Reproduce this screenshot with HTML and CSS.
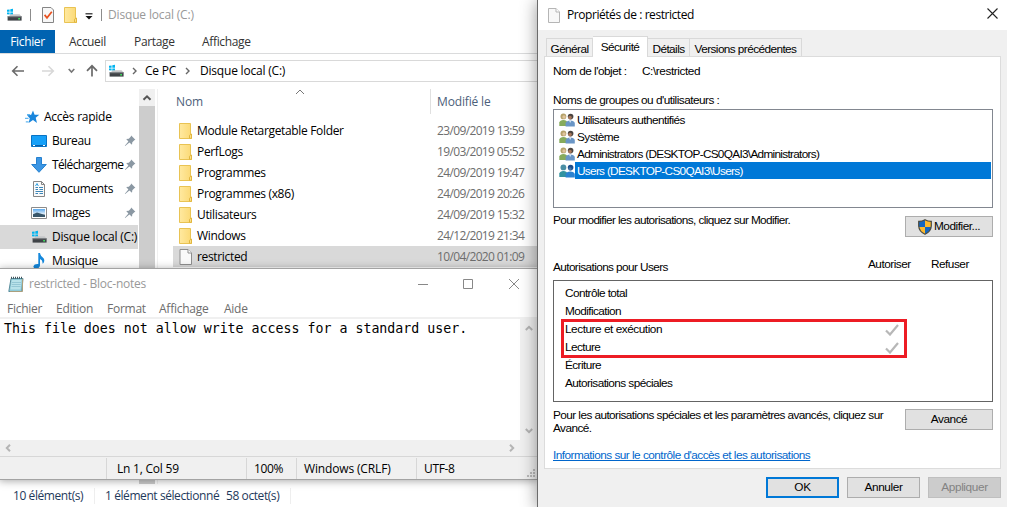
FILE: index.html
```
<!DOCTYPE html>
<html lang="fr">
<head>
<meta charset="utf-8">
<title>Disque local (C:)</title>
<link rel="stylesheet" href="styles.css">
</head>
<body>
<svg class="sprite" width="0" height="0" aria-hidden="true">
  <defs>
    <linearGradient id="fold" x1="0" x2="1"><stop offset="0" stop-color="#ffe9a0"/><stop offset="1" stop-color="#fbd975"/></linearGradient>
    <linearGradient id="sky" x1="0" x2="0" y1="0" y2="1"><stop offset="0" stop-color="#5aa9ee"/><stop offset=".6" stop-color="#dcebf8"/><stop offset="1" stop-color="#456"/></linearGradient>
  </defs>
  <symbol id="drive" viewBox="0 0 16 14">
    <path d="M1 1.8 3.6 1.4V3.7H1zM4.3 1.3 7 .8V3.7H4.3zM1 4.4H3.6V6.6L1 6.3zM4.3 4.4H7V7L4.3 6.7z" fill="#00b4f0"/>
    <path d="M3 8 5 6.2H13.5L15.5 8.5z" fill="#c4c6c8"/><path d="M1.6 8.3H15.6V12.6H1.6z" fill="#3f4347"/><path d="M1.6 8.3H15.6V9.2H1.6z" fill="#85898c"/><path d="M12.2 10H14V11.4H12.2z" fill="#40e060"/>
  </symbol>
  <symbol id="folder" viewBox="0 0 14 16">
    <path d="M.5.5H11.5V11.5H12.5V15.5H.5z" fill="url(#fold)" stroke="#e9c353"/><path d="M10.5 15.3V12.3L12.5 11V15.3z" fill="#fce38f" stroke="#e2b63f"/>
  </symbol>
  <symbol id="page" viewBox="0 0 13 16">
    <path d="M.5.5H8.5L12 4V15.5H.5z" fill="#f9f9f9" stroke="#8e8e8e"/><path d="M8.5.5V4H12" fill="#fff" stroke="#8e8e8e"/>
  </symbol>
  <symbol id="pin" viewBox="0 0 12 12">
    <path d="M7.2.6 11.4 4.8 10.3 5.3 8.3 7.2 8 9.8 5.4 7.4 1.2 11 .8 10.8 4.4 6.4 2.2 4 4.8 3.7 6.7 1.7z" fill="#8b98a3"/>
  </symbol>
  <symbol id="users" viewBox="0 0 16 14">
    <circle cx="4.4" cy="3.4" r="2.9" fill="#b5a26a"/><circle cx="5" cy="4" r="1.7" fill="#e0c49c"/>
    <path d="M.3 13V9.5Q1 7 4.4 7T8.5 9.5V13z" fill="#86ab5c"/>
    <circle cx="11.6" cy="3.6" r="2.8" fill="#4b4541"/><circle cx="11" cy="4.6" r="1.8" fill="#a8765a"/>
    <path d="M6.6 13.6V10Q7.5 7.4 11.3 7.4T15.8 10V13.6z" fill="#6a96c6"/><path d="M10 7.6 11.2 10 12.3 7.6z" fill="#dfeaf5"/>
  </symbol>
  <symbol id="users-sel" viewBox="0 0 16 14">
    <circle cx="4.4" cy="3.4" r="2.9" fill="#4b8fa5"/><path d="M.3 13V9.5Q1 7 4.4 7T8.5 9.5V13z" fill="#3293a0"/>
    <circle cx="11.6" cy="3.6" r="2.8" fill="#1b4c8b"/><circle cx="11" cy="4.8" r="1.6" fill="#4374a5"/>
    <path d="M6.6 13.6V10Q7.5 7.4 11.3 7.4T15.8 10V13.6z" fill="#2b82d0"/>
  </symbol>
</svg>

<main class="desktop">
  <section class="window explorer">
    <header class="ex-title">
      <svg class="i-drive"><use href="#drive"/></svg><i class="bar b1"></i>
      <svg class="i-check" viewBox="0 0 12 16"><path d="M.5.5H9L11.5 3V15.5H.5z" fill="#f7f7f7" stroke="#858585"/><path d="M2.6 7.9 5 10.8 9.8 4.8" fill="none" stroke="#e8501e" stroke-width="1.7"/></svg>
      <svg class="i-folder"><use href="#folder"/></svg>
      <svg class="i-drop" viewBox="0 0 8 7"><path d="M.5.8H7.5" stroke="#222" stroke-width="1.2"/><path d="M.5 3H7.5L4 6.5z" fill="#111"/></svg>
      <i class="bar b2"></i><span class="muted">Disque local (C:)</span>
    </header>
    <nav class="ribbon">
      <span class="file-tab">Fichier</span><span class="r1">Accueil</span><span class="r2">Partage</span><span>Affichage</span>
    </nav>
    <div class="address-row">
      <svg class="nav-arrows" viewBox="0 0 105 22">
        <path d="M24 11H13M17.5 6.2 12.7 11 17.5 15.8" fill="none" stroke="#6a6a6a" stroke-width="1.6"/>
        <path d="M42 11H53M48.5 6.2 53.3 11 48.5 15.8" fill="none" stroke="#d8d8d8" stroke-width="1.6"/>
        <path d="M68.7 9 71.5 12 74.3 9" fill="none" stroke="#777" stroke-width="1.6"/>
        <path d="M92 16.5V6M87 10.8 92 5.8 97 10.8" fill="none" stroke="#6a6a6a" stroke-width="1.7"/>
      </svg>
      <div class="address">
        <svg class="i-drive"><use href="#drive"/></svg>
        <svg class="chev" viewBox="0 0 5 8"><path d="M1 1 4 4 1 7" fill="none" stroke="#666" stroke-width="1.4"/></svg>
        <span class="crumb">Ce PC</span>
        <svg class="chev" viewBox="0 0 5 8"><path d="M1 1 4 4 1 7" fill="none" stroke="#666" stroke-width="1.4"/></svg>
        <span>Disque local (C:)</span>
      </div>
    </div>
    <div class="ex-body">
      <ul class="tree">
        <li class="root"><svg class="i16" viewBox="0 0 16 16"><path d="M9 1.5 10.6 5.8H15.3L11.7 8.8 13 14 9 11 4.6 14 5.8 9.2 3 6.2 7.2 5.8z" fill="#1a86dc"/><path d="M1 9.3H4.5M3 5.6H6M1.8 12.8H4.6" stroke="#62b6f0" stroke-width="1.2"/></svg><span>Accès rapide</span></li>
        <li><svg class="i16" viewBox="0 0 16 16"><path d="M.5 2.5H15.5V13.5H.5z" fill="#16a0f8" stroke="#0873c4"/><path d="M1 12.5H15" stroke="#0a5fa8"/><path d="M2 12.5H4M12 12.5H14" stroke="#fff"/></svg><span>Bureau</span><svg class="pin"><use href="#pin"/></svg></li>
        <li><svg class="i16" viewBox="0 0 16 16"><path d="M5.5.5H10.5V7.5H15.3L8 15.3.7 7.5H5.5z" fill="#3c96e4" stroke="#2580cf"/></svg><span class="downloads">Téléchargeme</span><svg class="pin"><use href="#pin"/></svg></li>
        <li><svg class="i16" viewBox="0 0 16 16"><path d="M2.5.5H10.5L13.5 3.5V15.5H2.5z" fill="#fafafa" stroke="#858585"/><path d="M10.5.5V3.5H13.5" fill="none" stroke="#858585"/><path d="M4.5 6.5H7M8 6.5H12M4.5 8.5H7M8.5 8.5H12M4.5 10.5H12M4.5 12.5H7M8.5 12.5H12" stroke="#3c86b8"/><path d="M4.5 5 6 2.5 7.3 5" fill="none" stroke="#2d9ee0"/></svg><span>Documents</span><svg class="pin"><use href="#pin"/></svg></li>
        <li><svg class="i16" viewBox="0 0 16 16"><path d="M.5 2.5H15.5V13.5H.5z" fill="#fff" stroke="#8b8b8b"/><path d="M2 4H14V12H2z" fill="url(#sky)"/><path d="M2 9.2 6 7.6 14 10V12H2z" fill="#38566a"/></svg><span>Images</span><svg class="pin"><use href="#pin"/></svg></li>
        <li class="selected"><svg class="i16"><use href="#drive"/></svg><span>Disque local (C:)</span></li>
        <li><svg class="i16" viewBox="0 0 16 16"><path d="M7.3 0H9Q9.4 2.8 11.8 4.5T12.8 9.5L11.6 11Q12 7.2 9 6V12.5Q8.5 15.6 5 15.8 2.3 15.6 2.4 13.3 3.2 10.6 7.3 11z" fill="#1588dc"/></svg><span>Musique</span></li>
      </ul>
      <div class="tree-scroll"><svg viewBox="0 0 16 17"><path d="M4.5 10.8 8 7.3 11.5 10.8" fill="none" stroke="#555" stroke-width="2"/></svg></div>
      <div class="files">
        <div class="file-head"><span class="name">Nom</span><svg class="sort" viewBox="0 0 10 6"><path d="M1 5 5 1 9 5" fill="none" stroke="#777"/></svg><span class="mod">Modifié le</span></div>
        <div class="file"><svg class="i-folder"><use href="#folder"/></svg><span class="name">Module Retargetable Folder</span><time>23/09/2019 13:59</time></div>
        <div class="file"><svg class="i-folder"><use href="#folder"/></svg><span class="name">PerfLogs</span><time>19/03/2019 05:52</time></div>
        <div class="file"><svg class="i-folder"><use href="#folder"/></svg><span class="name">Programmes</span><time>24/09/2019 19:47</time></div>
        <div class="file"><svg class="i-folder"><use href="#folder"/></svg><span class="name">Programmes (x86)</span><time>24/09/2019 20:26</time></div>
        <div class="file"><svg class="i-folder"><use href="#folder"/></svg><span class="name">Utilisateurs</span><time>24/09/2019 15:32</time></div>
        <div class="file"><svg class="i-folder"><use href="#folder"/></svg><span class="name">Windows</span><time>24/12/2019 21:34</time></div>
        <div class="file selected"><svg class="i-folder"><use href="#page"/></svg><span class="name">restricted</span><time>10/04/2020 01:09</time></div>
      </div>
    </div>
    <footer class="ex-status"><span class="count">10 élément(s)</span><span class="selection">1 élément sélectionné</span><span class="size">58 octet(s)</span></footer>
  </section>

  <section class="window notepad">
    <header class="np-title">
      <svg class="np-icon" viewBox="0 0 16 17"><path d="M3 2.5H15L13.8 15.5H.8z" fill="#8fcbd8" stroke="#5b8d9c"/><path d="M3.8 4H13.5L12.5 13.5H2.4z" fill="#b9e2ea"/><path d="M4 6.5H13M3.8 8.5H12.8M3.5 10.5H12.5" stroke="#85bccb" stroke-width=".7"/><path d="M3 1.8H15" stroke="#40555c" stroke-width="2" stroke-dasharray="1 1"/><path d="M14.5 3V15.5H2" fill="none" stroke="#ab9f7d"/></svg>
      <span>restricted - Bloc-notes</span>
      <svg class="controls" viewBox="0 0 110 16"><path d="M4 8.5H14" stroke="#888"/><path d="M49.5 3.5H58.5V12.5H49.5z" fill="none" stroke="#888"/><path d="M95 3 105 13M105 3 95 13" stroke="#888"/></svg>
    </header>
    <nav class="np-menu"><span class="m1">Fichier</span><span class="m2">Edition</span><span class="m3">Format</span><span class="m4">Affichage</span><span>Aide</span></nav>
    <div class="np-main">
      <p>This file does not allow write access for a standard user.</p>
      <div class="vscroll"><svg viewBox="0 0 8 6"><path d="M.8 5 4 1.8 7.2 5" fill="none" stroke="#b5b5b5" stroke-width="2"/></svg><svg viewBox="0 0 8 6"><path d="M.8 1 4 4.2 7.2 1" fill="none" stroke="#b5b5b5" stroke-width="2"/></svg></div>
    </div>
    <div class="hscroll"><svg viewBox="0 0 6 8"><path d="M5 .8 1.8 4 5 7.2" fill="none" stroke="#b5b5b5" stroke-width="2"/></svg><svg viewBox="0 0 6 8"><path d="M1 .8 4.2 4 1 7.2" fill="none" stroke="#b5b5b5" stroke-width="2"/></svg></div>
    <footer class="np-status"><span class="s0"></span><span class="s1">Ln 1, Col 59</span><span class="s2">100%</span><span class="s3">Windows (CRLF)</span><span class="s4">UTF-8</span>
      <svg class="grip" viewBox="0 0 8 8"><path d="M6 0h2v2H6zM3 3h2v2H3zM6 3h2v2H6zM0 6h2v2H0zM3 6h2v2H3zM6 6h2v2H6z" fill="#bbb"/></svg></footer>
  </section>

  <section class="window dialog">
    <header class="dg-title">
      <svg class="dg-icon" viewBox="0 0 12 15"><path d="M.5.5H8L11.5 4V14.5H.5z" fill="#f8f8f8" stroke="#b5b5b5"/><path d="M8 .5V4H11.5" fill="#fff" stroke="#b5b5b5"/></svg>
      <span>Propriétés de : restricted</span>
      <svg class="close" viewBox="0 0 11 11"><path d="M.5.5 10.5 10.5M10.5.5.5 10.5" stroke="#222" stroke-width="1.1"/></svg>
    </header>
    <nav class="tabs"><span class="t1">Général</span><span class="active">Sécurité</span><span class="t3">Détails</span><span class="t4">Versions précédentes</span></nav>
    <div class="panel">
      <div class="object"><span>Nom de l'objet :</span><span>C:\restricted</span></div>
      <div class="label">Noms de groupes ou d'utilisateurs :</div>
      <ul class="groups">
        <li><svg><use href="#users"/></svg><span>Utilisateurs authentifiés</span></li>
        <li><svg><use href="#users"/></svg><span>Système</span></li>
        <li><svg><use href="#users"/></svg><span class="adm">Administrators (DESKTOP-CS0QAI3\Administrators)</span></li>
        <li class="selected"><svg><use href="#users-sel"/></svg><span class="adm">Users (DESKTOP-CS0QAI3\Users)</span></li>
      </ul>
      <div class="edit-row"><span>Pour modifier les autorisations, cliquez sur Modifier.</span>
        <button class="side-btn"><svg viewBox="0 0 14 16"><path d="M7 .7Q10 2.5 13.3 2.4V7Q13 12.5 7 15.3 1 12.5.7 7V2.4Q4 2.5 7 .7z" fill="#fcb92c"/><path d="M7 1V8H.8V2.4Q4 2.5 7 1zM7 8H13.2Q12.5 12.5 7 15z" fill="#1467c0"/><path d="M7 .7Q10 2.5 13.3 2.4V7Q13 12.5 7 15.3 1 12.5.7 7V2.4Q4 2.5 7 .7z" fill="none" stroke="#4a4a42" stroke-width="1.2"/></svg>Modifier...</button>
      </div>
      <div class="perm-head"><span class="who">Autorisations pour Users</span><span class="allow">Autoriser</span><span>Refuser</span></div>
      <div class="perms">
        <ul>
          <li>Contrôle total</li><li>Modification</li>
          <li class="wide">Lecture et exécution<svg viewBox="0 0 14 12"><path d="M1 6.5 5 10.5 13 1" fill="none" stroke="#b7b7b7" stroke-width="2.2"/></svg></li>
          <li>Lecture<svg viewBox="0 0 14 12"><path d="M1 6.5 5 10.5 13 1" fill="none" stroke="#b7b7b7" stroke-width="2.2"/></svg></li>
          <li>Écriture</li><li>Autorisations spéciales</li>
        </ul>
        <i class="highlight"></i>
      </div>
      <div class="advanced"><p>Pour les autorisations spéciales et les paramètres avancés, cliquez sur<br>Avancé.</p><button class="side-btn">Avancé</button></div>
      <a class="link">Informations sur le contrôle d'accès et les autorisations</a>
    </div>
    <footer class="actions"><button class="default">OK</button><button>Annuler</button><button class="disabled">Appliquer</button></footer>
  </section>
</main>
</body>
</html>
```
FILE: styles.css
```
* { box-sizing: border-box; }
body { margin: 0; background: #fff; overflow: hidden; }
ul, p { margin: 0; padding: 0; list-style: none; }
svg { display: block; flex: none; }
.sprite { position: absolute; }
.desktop { position: relative; width: 1009px; height: 508px; overflow: hidden; font: 12px/16px "Open Sans", "Noto Sans", sans-serif; letter-spacing: -.34px; color: #000; white-space: nowrap; }
.window { position: absolute; display: flex; flex-direction: column; }

/* Explorer */
.explorer { left: 0; top: 0; width: 538px; height: 508px; background: #fff; }
.ex-title { height: 30px; display: flex; align-items: center; padding-left: 6px; }
.i-drive { width: 16px; height: 14px; }
.bar { width: 1px; height: 12px; background: #8c8c8c; }
.b1 { margin: 0 11px 0 8px; }
.i-check { width: 12px; height: 16px; margin-right: 10px; }
.i-folder { width: 14px; height: 16px; }
.i-drop { width: 8px; height: 7px; margin: 2px 8px 0 7px; }
.b2 { margin-right: 6px; }
.muted { color: #999; letter-spacing: -.16px; }
.ribbon { height: 24px; display: flex; align-items: center; border-bottom: 1px solid #dadbdc; color: #333; }
.file-tab { width: 55px; height: 23px; line-height: 23px; text-align: center; background: #0063b1; color: #fff; margin-right: 14px; }
.r1 { width: 65px; }
.r2 { width: 68px; }
.address-row { height: 35px; padding-top: 6px; display: flex; }
.nav-arrows { width: 105px; height: 22px; }
.address { flex: 1; height: 22px; border: 1px solid #d9d9d9; border-right: 0; display: flex; align-items: center; padding-left: 2px; letter-spacing: -.2px; }
.chev { width: 5px; height: 8px; margin: 0 8px 0 8px; }
.crumb { width: 33px; }
.address .crumb + .chev { margin-left: 7px; margin-right: 10px; }
.ex-body { height: 395px; display: flex; }
.tree { width: 139px; padding-top: 16px; }
.tree li { width: 138px; height: 24px; display: flex; align-items: center; padding-left: 31px; }
.tree .root { padding-left: 24px; }
.root span { letter-spacing: -.25px; }
.i16 { width: 16px; height: 16px; margin-right: 5px; }
.root .i16 { margin-right: 4px; }
.tree .selected { background: #d9d9d9; letter-spacing: -.2px; }
.downloads { letter-spacing: -.62px; }
.pin { width: 12px; height: 12px; margin-left: auto; margin-right: 2px; }
.tree-scroll { width: 16px; background: #cdcdcd; }
.tree-scroll svg { width: 16px; height: 17px; background: #f0f0f0; }
.files { flex: 1; margin-left: 2px; border-left: 1px solid #f0f0f0; padding-left: 15px; }
.file-head { position: relative; height: 31px; display: flex; align-items: flex-start; color: #4c607a; }
.file-head .name { width: 257px; padding: 5px 0 0 3px; letter-spacing: -.1px; }
.sort { position: absolute; left: 122px; top: 0; width: 10px; height: 6px; }
.mod { height: 25px; padding: 5px 0 0 6px; border-left: 1px solid #e0e0e0; letter-spacing: -.15px; }
.file { height: 21px; display: flex; align-items: center; padding-left: 6px; }
.file .name { width: 240px; margin-left: 4px; }
.file time { color: #6d6d6d; letter-spacing: -.64px; }
.file.selected { background: #d9d9d9; }
.ex-status { height: 24px; display: flex; align-items: center; color: #1e395b; letter-spacing: -.42px; }
.count { width: 95px; padding-left: 13px; border-right: 1px solid #eee; }
.selection { width: 132px; padding-left: 10px; }
.size { width: 65px; border-right: 1px solid #eee; margin-left: -1px; }

/* Notepad */
.notepad { left: -1px; top: 268px; width: 539px; height: 212px; border: 1px solid #a3a3a3; background: #fff; box-shadow: 0 1px 8px rgba(0,0,0,.35); }
.np-title { height: 30px; display: flex; align-items: center; padding-left: 8px; color: #999; }
.np-icon { width: 16px; height: 17px; margin-right: 5px; }
.controls { width: 110px; height: 16px; margin: 0 13px 0 auto; }
.np-title span { letter-spacing: -.25px; }
.np-menu { height: 20px; display: flex; align-items: center; padding: 2px 0 0 7px; color: #6d6d6d; border-bottom: 2px solid #f0f0f0; letter-spacing: -.25px; }
.m1 { width: 49px; } .m2 { width: 51px; } .m3 { width: 52px; } .m4 { width: 65px; }
.np-main { height: 121px; display: flex; }
.np-main p { flex: 1; padding: 2px 0 0 4px; font: 13.27px/16px "DejaVu Sans Mono", monospace; letter-spacing: 0; color: #000; }
.vscroll { width: 17px; background: #f0f0f0; display: flex; flex-direction: column; justify-content: space-between; align-items: center; padding: 6px 0; }
.vscroll svg { width: 8px; height: 6px; }
.hscroll { height: 16px; background: #f0f0f0; display: flex; justify-content: space-between; align-items: center; padding: 0 22px 0 5px; }
.hscroll svg { width: 6px; height: 8px; }
.np-status { position: relative; flex: 1; background: #f0f0f0; border-top: 1px solid #d7d7d7; display: flex; padding-top: 1px; line-height: 21px; }
.np-status span { border-right: 1px solid #d7d7d7; }
.s0 { width: 107px; }
.s1 { width: 140px; padding-left: 10px; letter-spacing: -.22px; }
.s2 { width: 50px; padding-left: 7px; }
.s3 { width: 120px; padding-left: 7px; letter-spacing: -.15px; }
.np-status .s4 { padding-left: 7px; border: 0; }
.grip { position: absolute; right: 2px; bottom: 2px; width: 8px; height: 8px; }

/* Properties dialog */
.dialog { left: 537px; top: -1px; width: 470px; height: 508px; border-left: 1px solid #6b6b6b; background: #f0f0f0; box-shadow: 0 2px 16px rgba(0,0,0,.42); clip-path: inset(0 0 0 -20px); font: 11.8px/13px "Liberation Sans", Arial, sans-serif; letter-spacing: -.58px; color: #000; }
.dg-title { height: 31px; background: #fff; display: flex; align-items: center; padding: 1px 9px 0 10px; font: 12px/16px "Open Sans", sans-serif; letter-spacing: -.44px; }
.dg-icon { width: 12px; height: 15px; margin-right: 7px; }
.close { width: 11px; height: 11px; margin: -3px 0 0 auto; }
.tabs { height: 27px; display: flex; align-items: flex-end; padding-left: 8px; margin-bottom: -1px; }
.tabs span { height: 19px; border: 1px solid #d9d9d9; border-left: 0; border-bottom: 0; text-align: center; line-height: 20px; }
.tabs .t1 { width: 47px; border-left: 1px solid #d9d9d9; }
.tabs .active { position: relative; z-index: 1; width: 55px; height: 21px; background: #fff; }
.t3 { width: 42px; }
.t4 { width: 112px; }
.panel { width: 457px; height: 413px; margin-left: 6px; border: 1px solid #dcdcdc; background: #fff; padding: 8px 7px 0 8px; }
.object { height: 29px; display: flex; }
.object span:first-child { width: 89px; letter-spacing: -.5px; }
.object span:last-child { letter-spacing: -.42px; }
.label { height: 15px; letter-spacing: -.52px; }
.groups { height: 99px; border: 1px solid #828790; padding: 1px; }
.groups li { height: 17px; display: flex; align-items: center; padding-left: 4px; }
.groups svg { width: 16px; height: 14px; }
.groups span { flex: 1; line-height: 18px; height: 17px; padding-left: 2px; letter-spacing: -.56px; }
.groups .adm { letter-spacing: -.7px; }
.groups .selected span { background: #0078d7; color: #fff; }
.edit-row { height: 46px; display: flex; justify-content: space-between; padding-top: 6px; letter-spacing: -.6px; }
button { font: inherit; letter-spacing: inherit; color: inherit; padding: 0; background: #e1e1e1; border: 1px solid #adadad; display: flex; align-items: center; justify-content: center; }
.side-btn { width: 88px; height: 21px; margin-top: 2px; letter-spacing: -.45px; }
.side-btn svg { width: 14px; height: 16px; margin-right: 2px; }
.perm-head { height: 26px; display: flex; padding-top: 4px; letter-spacing: -.5px; }
.who { width: 315px; padding-top: 3px; letter-spacing: -.6px; }
.allow { width: 63px; }
.perms { position: relative; height: 122px; border: 1px solid #646464; padding: 3px 0 0 11px; }
.perms li { height: 18px; display: flex; align-items: center; }
.perms .wide { letter-spacing: -.46px; }
.perms svg { width: 14px; height: 12px; margin: 2px 93px 0 auto; }
.highlight { position: absolute; left: 7px; top: 38px; width: 346px; height: 39px; border: 3px solid #ed1c24; }
.advanced { height: 47px; display: flex; justify-content: space-between; padding-top: 7px; letter-spacing: -.57px; }
.link { color: #0066cc; text-decoration: underline; letter-spacing: -.52px; }
.advanced .side-btn { margin-top: 0; }
.actions { display: flex; justify-content: flex-end; gap: 8px; padding: 8px 6px 0 0; }
.actions button { width: 73px; height: 21px; letter-spacing: -.38px; }
.actions .default { border: 2px solid #0078d7; }
.actions .disabled { background: #ccc; border-color: #bfbfbf; color: #838383; }
```
